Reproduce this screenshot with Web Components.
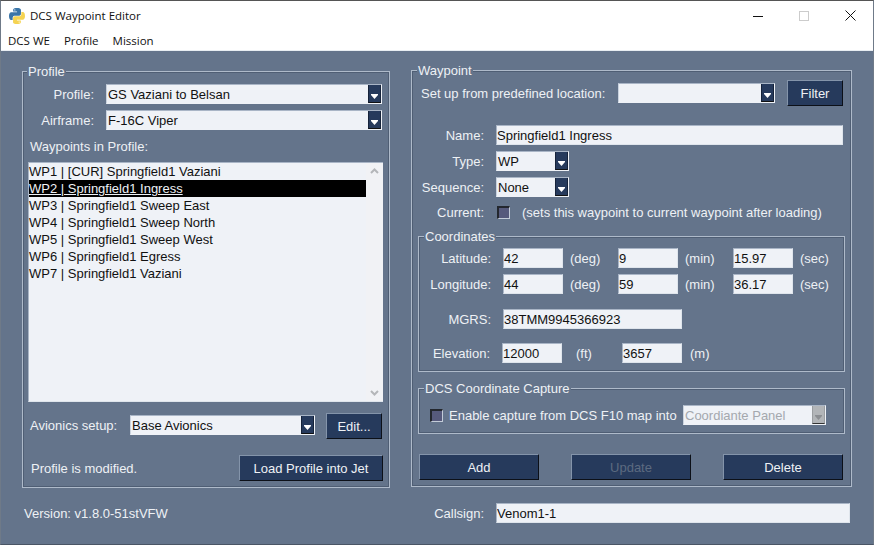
<!DOCTYPE html>
<html>
<head>
<meta charset="utf-8">
<title>DCS Waypoint Editor</title>
<style>
    html, body {
        margin: 0;
        padding: 0;
        height: 100%;
        overflow: hidden;
        background: #64748b;
    }
</style>
</head>
<body>
<dcs-app></dcs-app>
<script>
const FONT = `"Liberation Sans", Arial, sans-serif`;

class WinTitlebar extends HTMLElement {
    constructor() {
        super();
        this.attachShadow({mode: 'open'});
        this.shadowRoot.innerHTML = `
        <style>
            :host {
                display: flex;
                align-items: center;
                height: 29px;
                background: #fff;
                color: #111;
                font: 11.5px "Open Sans", "Noto Sans", sans-serif;
            }
            .logo { margin-left: 8px; margin-right: 5px; }
            .title { flex: 1; }
            .ctrl { width: 46px; height: 29px; display: flex; align-items: center; justify-content: center; }
            .ctrls { display: flex; margin-right: 0; }
        </style>
        <svg class="logo" width="16" height="16" viewBox="0 0 110 110">
            <path fill="#3a75a8" d="M54.9 0C26.9 0 28.6 12.2 28.6 12.2v12.6h26.7v3.8H18S0 26.6 0 54.9s15.7 27.3 15.7 27.3h9.4V69s-.5-15.7 15.5-15.7h26.6s15 .2 15-14.5V14.5S84.5 0 54.9 0z"/>
            <circle cx="40" cy="13" r="4.8" fill="#dfe9f2"/>
            <path fill="#f5d352" transform="rotate(180 55 55)" d="M54.9 0C26.9 0 28.6 12.2 28.6 12.2v12.6h26.7v3.8H18S0 26.6 0 54.9s15.7 27.3 15.7 27.3h9.4V69s-.5-15.7 15.5-15.7h26.6s15 .2 15-14.5V14.5S84.5 0 54.9 0z"/>
            <circle cx="70" cy="97" r="4.8" fill="#fff8dc"/>
        </svg>
        <span class="title"><slot></slot></span>
        <div class="ctrls">
            <div class="ctrl"><svg width="10" height="10"><path d="M0 5.5h10" stroke="#111" fill="none"/></svg></div>
            <div class="ctrl"><svg width="10" height="10"><rect x=".5" y=".5" width="9" height="9" stroke="#ccc" fill="none"/></svg></div>
            <div class="ctrl"><svg width="11" height="11"><path d="M.5.5l10 10M10.5.5l-10 10" stroke="#111" fill="none"/></svg></div>
        </div>`;
    }
}

class WinMenubar extends HTMLElement {
    constructor() {
        super();
        this.attachShadow({mode: 'open'});
        this.shadowRoot.innerHTML = `
        <style>
            :host {
                display: flex;
                align-items: center;
                gap: 14px;
                height: 20px;
                padding-left: 7px;
                background: #fff;
                color: #111;
                font: 11.5px "Open Sans", "Noto Sans", sans-serif;
                border-bottom: 1px solid #e8edf2;
            }
        </style>
        <span>DCS WE</span><span>Profile</span><span>Mission</span>`;
    }
}

class TkFrame extends HTMLElement {
    constructor() {
        super();
        this.attachShadow({mode: 'open'});
        this.shadowRoot.innerHTML = `
        <style>
            :host {
                display: block;
                position: relative;
                box-sizing: border-box;
                border: 1px solid #aebaca;
                outline: 1px solid #4f5e74;
                outline-offset: -2px;
            }
            .legend {
                position: absolute;
                top: -8px;
                left: var(--legend-left, 5px);
                padding: 0 1px;
                line-height: 15px;
                background: #64748b;
                color: #eef1f5;
            }
            .inner { padding: 1px; }
        </style>
        <span class="legend"></span>
        <div class="inner"><slot></slot></div>`;
    }
    connectedCallback() {
        this.shadowRoot.querySelector('.legend').textContent = this.getAttribute('label');
    }
}

class TkEntry extends HTMLElement {
    constructor() {
        super();
        this.attachShadow({mode: 'open'});
        this.shadowRoot.innerHTML = `
        <style>
            :host {
                display: block;
                flex: none;
                box-sizing: border-box;
                height: 20px;
                line-height: 20px;
                background: #eff2f7;
                color: #111;
                border-top: 1px solid #a9b5c6;
                border-left: 1px solid #a9b5c6;
                border-right: 1px solid #dfe5ec;
                border-bottom: 1px solid #dfe5ec;
                white-space: nowrap;
                overflow: hidden;
            }
        </style>
        <slot></slot>`;
    }
}

class TkCombo extends HTMLElement {
    constructor() {
        super();
        this.attachShadow({mode: 'open'});
        this.shadowRoot.innerHTML = `
        <style>
            :host {
                display: flex;
                flex: none;
                box-sizing: border-box;
                height: 20px;
                background: #eff2f7;
                color: #111;
                border-top: 1px solid #a9b5c6;
                border-left: 1px solid #c9d2de;
                border-right: 1px solid #eff2f7;
                border-bottom: 1px solid #eff2f7;
            }
            :host([disabled]) { color: #a4a8ae; }
            .text { flex: 1; line-height: 20px; padding-left: 1px; white-space: nowrap; overflow: hidden; }
            .arrow {
                box-sizing: border-box;
                width: 13px;
                background: #263a5c;
                border-left: 1px solid #16233a;
                border-right: 1px solid #16233a;
                border-bottom: 1px solid #111;
                display: flex;
                align-items: flex-end;
                justify-content: center;
                padding-bottom: 3px;
            }
            :host([disabled]) .arrow { background: #b2b5b8; border-color: #9a9da0; border-bottom-color: #333; }
            polygon { fill: #fff; }
            :host([disabled]) polygon { fill: #8b8e92; }
        </style>
        <div class="text"><slot></slot></div>
        <div class="arrow"><svg width="7" height="5"><polygon points="0,0 7,0 7,1 3.5,5 0,1"/></svg></div>`;
    }
}

class TkButton extends HTMLElement {
    constructor() {
        super();
        this.attachShadow({mode: 'open'});
        this.shadowRoot.innerHTML = `
        <style>
            :host {
                display: flex;
                flex: none;
                align-items: center;
                justify-content: center;
                box-sizing: border-box;
                height: 26px;
                background: #263a5c;
                color: #eef1f5;
                border-top: 1px solid #8494aa;
                border-left: 1px solid #8494aa;
                border-right: 1px solid #0c1018;
                border-bottom: 1px solid #0c1018;
            }
            :host([disabled]) { color: #5c6a80; }
        </style>
        <slot></slot>`;
    }
}

class TkCheck extends HTMLElement {
    constructor() {
        super();
        this.attachShadow({mode: 'open'});
        this.shadowRoot.innerHTML = `
        <style>
            :host {
                display: block;
                flex: none;
                box-sizing: border-box;
                width: 13px;
                height: 13px;
                background: #565a7c;
                border-top: 2px solid #23272e;
                border-left: 2px solid #23272e;
                border-right: 1px solid #c3ccd8;
                border-bottom: 1px solid #c3ccd8;
            }
        </style>`;
    }
}

class TkListbox extends HTMLElement {
    constructor() {
        super();
        this.attachShadow({mode: 'open'});
        this.shadowRoot.innerHTML = `
        <style>
            :host {
                display: flex;
                box-sizing: border-box;
                height: 240px;
                background: #eff2f7;
                color: #111;
                border-top: 1px solid #a9b5c6;
                border-left: 1px solid #a9b5c6;
                border-bottom: 1px solid #dfe5ec;
            }
            ul { flex: 1; list-style: none; margin: 0; padding: 0; }
            li { height: 17px; line-height: 17px; padding-left: 0; white-space: nowrap; }
            li.sel { background: #000; color: #eef1f5; text-decoration: underline; }
            .bar {
                width: 17px;
                background: #f1f2f5;
                display: flex;
                flex-direction: column;
                justify-content: space-between;
                align-items: center;
                padding: 5px 0;
            }
        </style>
        <ul></ul>
        <div class="bar">
            <svg width="9" height="6"><path d="M1 5l3.5-3.5L8 5" stroke="#b4b6b9" stroke-width="2" fill="none"/></svg>
            <svg width="9" height="6"><path d="M1 1l3.5 3.5L8 1" stroke="#b4b6b9" stroke-width="2" fill="none"/></svg>
        </div>`;
    }
    connectedCallback() {
        const items = this.getAttribute('items').split(';');
        const selected = Number(this.getAttribute('selected'));
        this.shadowRoot.querySelector('ul').innerHTML = items.map((value, i) => {
            return `<li class="${i === selected ? 'sel' : ''}">${value}</li>`;
        }).join('');
    }
}

class ProfilePanel extends HTMLElement {
    constructor() {
        super();
        this.attachShadow({mode: 'open'});
        this.shadowRoot.innerHTML = `
        <style>
            :host { display: block; }
            tk-frame { height: 417px; --legend-left: 4px; }
            .wrap { padding: 11px 0 0 4px; }
            .row { display: flex; align-items: center; height: 20px; }
            .lbl { width: 66px; text-align: right; margin-right: 12px; padding-top: 1px; }
            .row + .row { margin-top: 6px; }
            .row tk-combo { width: 276px; }
            .wp { margin: 7px 0 0 2px; height: 25px; line-height: 20px; }
            tk-listbox { width: 355px; }
            .avionics { display: flex; align-items: flex-start; height: 26px; margin-top: 11px; }
            .avionics span { width: 100px; padding: 5px 0 0 2px; }
            .avionics tk-combo { width: 185px; margin-top: 2px; }
            .avionics tk-button { width: 56px; margin-left: 11px; }
            .foot { display: flex; align-items: center; justify-content: space-between; height: 26px; width: 355px; margin-top: 16px; }
            .foot span { padding-left: 3px; padding-top: 1px; }
            .foot tk-button { width: 144px; }
        </style>
        <tk-frame label="Profile">
            <div class="wrap">
                <div class="row"><span class="lbl">Profile:</span><tk-combo>GS Vaziani to Belsan</tk-combo></div>
                <div class="row"><span class="lbl">Airframe:</span><tk-combo>F-16C Viper</tk-combo></div>
                <div class="wp">Waypoints in Profile:</div>
                <tk-listbox selected="1" items="WP1 | [CUR] Springfield1 Vaziani;WP2 | Springfield1 Ingress;WP3 | Springfield1 Sweep East;WP4 | Springfield1 Sweep North;WP5 | Springfield1 Sweep West;WP6 | Springfield1 Egress;WP7 | Springfield1 Vaziani"></tk-listbox>
                <div class="avionics"><span>Avionics setup:</span><tk-combo>Base Avionics</tk-combo><tk-button>Edit...</tk-button></div>
                <div class="foot"><span>Profile is modified.</span><tk-button>Load Profile into Jet</tk-button></div>
            </div>
        </tk-frame>`;
    }
}

class CoordinatesPanel extends HTMLElement {
    constructor() {
        super();
        this.attachShadow({mode: 'open'});
        this.shadowRoot.innerHTML = `
        <style>
            :host { display: block; }
            tk-frame { height: 136px; }
            .wrap { padding-top: 10px; }
            .row { display: flex; align-items: center; height: 20px; }
            .row span { padding-top: 1px; flex: none; }
            .lbl { width: 71px; text-align: right; margin-right: 12px; }
            .short { width: 70px; }
            tk-entry { width: 60px; }
            tk-entry.mgrs { width: 179px; }
            .unit { width: 48px; padding-left: 7px; }
            .ft { width: 46px; padding-left: 14px; }
            .m { padding-left: 8px; }
            .r2 { margin-top: 6px; }
            .r3 { margin-top: 15px; }
            .r4 { margin-top: 14px; }
        </style>
        <tk-frame label="Coordinates">
            <div class="wrap">
                <div class="row"><span class="lbl">Latitude:</span><tk-entry>42</tk-entry><span class="unit">(deg)</span><tk-entry>9</tk-entry><span class="unit">(min)</span><tk-entry>15.97</tk-entry><span class="unit">(sec)</span></div>
                <div class="row r2"><span class="lbl">Longitude:</span><tk-entry>44</tk-entry><span class="unit">(deg)</span><tk-entry>59</tk-entry><span class="unit">(min)</span><tk-entry>36.17</tk-entry><span class="unit">(sec)</span></div>
                <div class="row r3"><span class="lbl">MGRS:</span><tk-entry class="mgrs">38TMM9945366923</tk-entry></div>
                <div class="row r4"><span class="lbl short">Elevation:</span><tk-entry>12000</tk-entry><span class="ft">(ft)</span><tk-entry>3657</tk-entry><span class="m">(m)</span></div>
            </div>
        </tk-frame>`;
    }
}

class WaypointPanel extends HTMLElement {
    constructor() {
        super();
        this.attachShadow({mode: 'open'});
        this.shadowRoot.innerHTML = `
        <style>
            :host { display: block; }
            tk-frame { height: 417px; }
            .wrap { padding: 8px 0 0 1px; }
            .row { display: flex; align-items: center; height: 20px; margin-top: 6px; }
            .row span { padding-top: 1px; }
            .preset { height: 26px; margin-top: 0; padding-left: 7px; }
            .preset span { width: 197px; }
            .preset tk-combo { width: 157px; }
            .preset tk-button { width: 56px; margin-left: 12px; }
            .lbl { width: 70px; text-align: right; margin-right: 12px; }
            .name { margin-top: 19px; }
            .name tk-entry { width: 347px; }
            .row tk-combo.small { width: 73px; }
            .current { margin-top: 5px; }
            .current tk-check { margin: 0 12px 0 1px; }
            coordinates-panel { margin: 14px 0 0 4px; width: 427px; }
            .capture { display: block; margin: 16px 0 0 4px; width: 427px; height: 46px; }
            .cap-row { display: flex; align-items: center; height: 20px; margin-top: 15px; padding-left: 10px; }
            .cap-row span { padding-top: 1px; }
            .cap-row tk-check { margin-right: 6px; }
            .cap-row span { width: 234px; white-space: nowrap; }
            .cap-row tk-combo { width: 143px; }
            .actions { display: flex; gap: 32px; margin: 20px 0 0 5px; }
            .actions tk-button { width: 120px; }
        </style>
        <tk-frame label="Waypoint">
            <div class="wrap">
                <div class="row preset"><span>Set up from predefined location:</span><tk-combo></tk-combo><tk-button>Filter</tk-button></div>
                <div class="row name"><span class="lbl">Name:</span><tk-entry>Springfield1 Ingress</tk-entry></div>
                <div class="row"><span class="lbl">Type:</span><tk-combo class="small">WP</tk-combo></div>
                <div class="row"><span class="lbl">Sequence:</span><tk-combo class="small">None</tk-combo></div>
                <div class="row current"><span class="lbl">Current:</span><tk-check></tk-check><span>(sets this waypoint to current waypoint after loading)</span></div>
                <coordinates-panel></coordinates-panel>
                <tk-frame class="capture" label="DCS Coordinate Capture">
                    <div class="cap-row"><tk-check></tk-check><span>Enable capture from DCS F10 map into</span><tk-combo disabled>Coordiante Panel</tk-combo></div>
                </tk-frame>
                <div class="actions"><tk-button>Add</tk-button><tk-button disabled>Update</tk-button><tk-button>Delete</tk-button></div>
            </div>
        </tk-frame>`;
    }
}

class DcsApp extends HTMLElement {
    constructor() {
        super();
        this.attachShadow({mode: 'open'});
        this.shadowRoot.innerHTML = `
        <style>
            :host {
                display: block;
                box-sizing: border-box;
                width: 874px;
                height: 545px;
                background: #64748b;
                color: #eef1f5;
                font: 13px ${FONT};
                border-top: 1px solid #555;
                border-left: 1px solid #6f7a88;
                border-right: 1px solid #6f7a88;
                border-bottom: 1px solid #4a5565;
            }
            .main { display: flex; align-items: flex-start; padding: 19px 0 0 21px; }
            profile-panel { width: 368px; margin-top: 1px; }
            waypoint-panel { width: 441px; margin-left: 21px; }
            .status { display: flex; align-items: center; height: 20px; margin-top: 15px; }
            .status span { padding-top: 1px; }
            .version { width: 402px; padding-left: 23px; box-sizing: border-box; }
            .call-lbl { width: 81px; text-align: right; margin-right: 12px; }
            .status tk-entry { width: 354px; }
        </style>
        <win-titlebar>DCS Waypoint Editor</win-titlebar>
        <win-menubar></win-menubar>
        <div class="main">
            <profile-panel></profile-panel>
            <waypoint-panel></waypoint-panel>
        </div>
        <div class="status">
            <span class="version">Version: v1.8.0-51stVFW</span>
            <span class="call-lbl">Callsign:</span>
            <tk-entry>Venom1-1</tk-entry>
        </div>`;
    }
}

customElements.define('win-titlebar', WinTitlebar);
customElements.define('win-menubar', WinMenubar);
customElements.define('tk-frame', TkFrame);
customElements.define('tk-entry', TkEntry);
customElements.define('tk-combo', TkCombo);
customElements.define('tk-button', TkButton);
customElements.define('tk-check', TkCheck);
customElements.define('tk-listbox', TkListbox);
customElements.define('coordinates-panel', CoordinatesPanel);
customElements.define('profile-panel', ProfilePanel);
customElements.define('waypoint-panel', WaypointPanel);
customElements.define('dcs-app', DcsApp);
</script>
</body>
</html>
